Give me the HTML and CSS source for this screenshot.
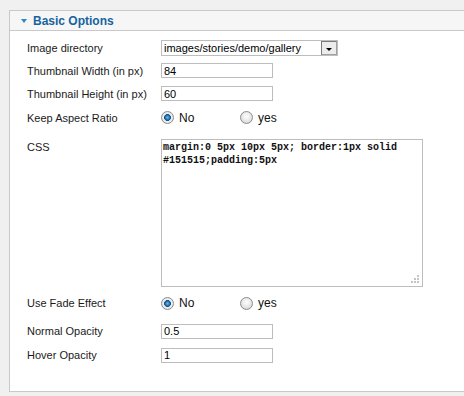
FILE: index.html
```html
<!DOCTYPE html>
<html lang="en">
<head>
    <meta charset="UTF-8">
    <title>Basic Options</title>
    <link rel="stylesheet" href="styles.css">
</head>
<body>
    <div class="panel">
        <div class="panel-head">
            <span class="arrow"></span>
            <span class="panel-title">Basic Options</span>
        </div>
        <div class="panel-body">
            <div class="param-row">
                <label class="param-label">Image directory</label>
                <div class="fake-select">
                    <span class="select-value">images/stories/demo/gallery</span>
                    <span class="select-btn"><span class="select-caret"></span></span>
                </div>
            </div>
            <div class="param-row">
                <label class="param-label">Thumbnail Width (in px)</label>
                <input type="text" class="text-field" value="84">
            </div>
            <div class="param-row">
                <label class="param-label">Thumbnail Height (in px)</label>
                <input type="text" class="text-field" value="60">
            </div>
            <div class="param-row radio-row">
                <label class="param-label">Keep Aspect Ratio</label>
                <div class="radio-group">
                    <span class="radio checked"></span><span class="radio-text">No</span>
                    <span class="radio"></span><span class="radio-text">yes</span>
                </div>
            </div>
            <div class="param-row area-row">
                <label class="param-label">CSS</label>
                <div class="area-wrap">
                    <textarea class="css-area">margin:0 5px 10px 5px; border:1px solid #151515;padding:5px</textarea>
                    <svg class="grip" width="9" height="9" viewBox="0 0 9 9">
                        <rect x="6" y="0" width="2" height="2" fill="#c4c4c4"/>
                        <rect x="3" y="3" width="2" height="2" fill="#c4c4c4"/>
                        <rect x="6" y="3" width="2" height="2" fill="#c4c4c4"/>
                        <rect x="0" y="6" width="2" height="2" fill="#c4c4c4"/>
                        <rect x="3" y="6" width="2" height="2" fill="#c4c4c4"/>
                        <rect x="6" y="6" width="2" height="2" fill="#c4c4c4"/>
                    </svg>
                </div>
            </div>
            <div class="param-row fade-row">
                <label class="param-label">Use Fade Effect</label>
                <div class="radio-group">
                    <span class="radio checked"></span><span class="radio-text">No</span>
                    <span class="radio"></span><span class="radio-text">yes</span>
                </div>
            </div>
            <div class="param-row">
                <label class="param-label">Normal Opacity</label>
                <input type="text" class="text-field" value="0.5">
            </div>
            <div class="param-row">
                <label class="param-label">Hover Opacity</label>
                <input type="text" class="text-field" value="1">
            </div>
        </div>
    </div>
</body>
</html>
```

FILE: styles.css
```css
body {
    margin: 0;
    background-color: #f0f0f0;
    font-family: "Liberation Sans", Arial, sans-serif;
    font-size: 11px;
    color: #1a1a1a;
}
.panel {
    margin: 10px 0 0 9px;
    border: 1px solid #c9c9c9;
    border-right: none;
    background-color: #fff;
}
.panel-head {
    height: 19px;
    display: flex;
    align-items: center;
    padding-left: 11px;
    background-color: #f6f6f6;
    border-bottom: 1px solid #c9c9c9;
}
.arrow {
    width: 0;
    height: 0;
    border-left: 3px solid transparent;
    border-right: 3px solid transparent;
    border-top: 4px solid #2f87c6;
    margin-right: 6px;
    margin-top: 1px;
}
.panel-title {
    color: #15639f;
    font-weight: bold;
    font-size: 12px;
}
.panel-body {
    padding: 5px 0 24px 17px;
}
.param-row {
    display: flex;
    align-items: center;
    height: 23px;
}
.param-label {
    width: 134px;
}
.radio-row {
    height: 25px;
}
.area-row {
    align-items: flex-start;
    height: auto;
    padding-top: 9px;
}
.area-row .param-label {
    padding-top: 2px;
}
.fade-row {
    height: 32px;
}
.fade-row + .param-row,
.fade-row + .param-row + .param-row {
    height: 24px;
}
.text-field {
    width: 112px;
    height: 15px;
    box-sizing: border-box;
    margin: 0;
    padding: 0 2px;
    border: 1px solid #bdbdbd;
    font-family: "Liberation Sans", Arial, sans-serif;
    font-size: 11px;
    color: #000;
}
.fake-select {
    width: 177px;
    height: 16px;
    box-sizing: border-box;
    display: flex;
    align-items: center;
    border: 1px solid #bdbdbd;
    color: #000;
}
.select-value {
    flex: 1;
    padding-left: 2px;
}
.select-btn {
    width: 16px;
    height: 14px;
    box-sizing: border-box;
    border: 1px solid #7a7a7a;
    border-right-color: #a0a0a0;
    border-bottom-color: #a0a0a0;
    background-color: #ececec;
    display: flex;
    align-items: flex-end;
    justify-content: center;
    padding-bottom: 3px;
}
.select-caret {
    width: 0;
    height: 0;
    border-left: 3px solid transparent;
    border-right: 3px solid transparent;
    border-top: 3px solid #000;
}
.radio-group {
    display: flex;
    align-items: center;
}
.radio {
    width: 13px;
    height: 13px;
    box-sizing: border-box;
    border-radius: 50%;
    border: 1px solid #8c8c8c;
    background: radial-gradient(circle at 50% 40%, #ffffff 0%, #e6e6e6 55%, #c8c8c8 100%);
}
.radio.checked {
    background: radial-gradient(circle, #6fb6ea 0%, #1d6fae 30%, #0e4f86 40%, #f2f2f2 48%, #dedede 80%, #cfcfcf 100%);
}
.radio-text {
    margin-left: 5px;
    width: 61px;
    font-size: 12px;
    color: #111;
}
.area-wrap {
    position: relative;
    width: 262px;
    height: 148px;
}
.css-area {
    display: block;
    width: 262px;
    height: 148px;
    box-sizing: border-box;
    margin: 0;
    padding: 1px 1px;
    border: 1px solid #bdbdbd;
    resize: none;
    font-family: "Liberation Mono", "Courier New", monospace;
    font-weight: bold;
    font-size: 10px;
    line-height: 13px;
    color: #111;
}
.grip {
    position: absolute;
    right: 3px;
    bottom: 3px;
}
```
